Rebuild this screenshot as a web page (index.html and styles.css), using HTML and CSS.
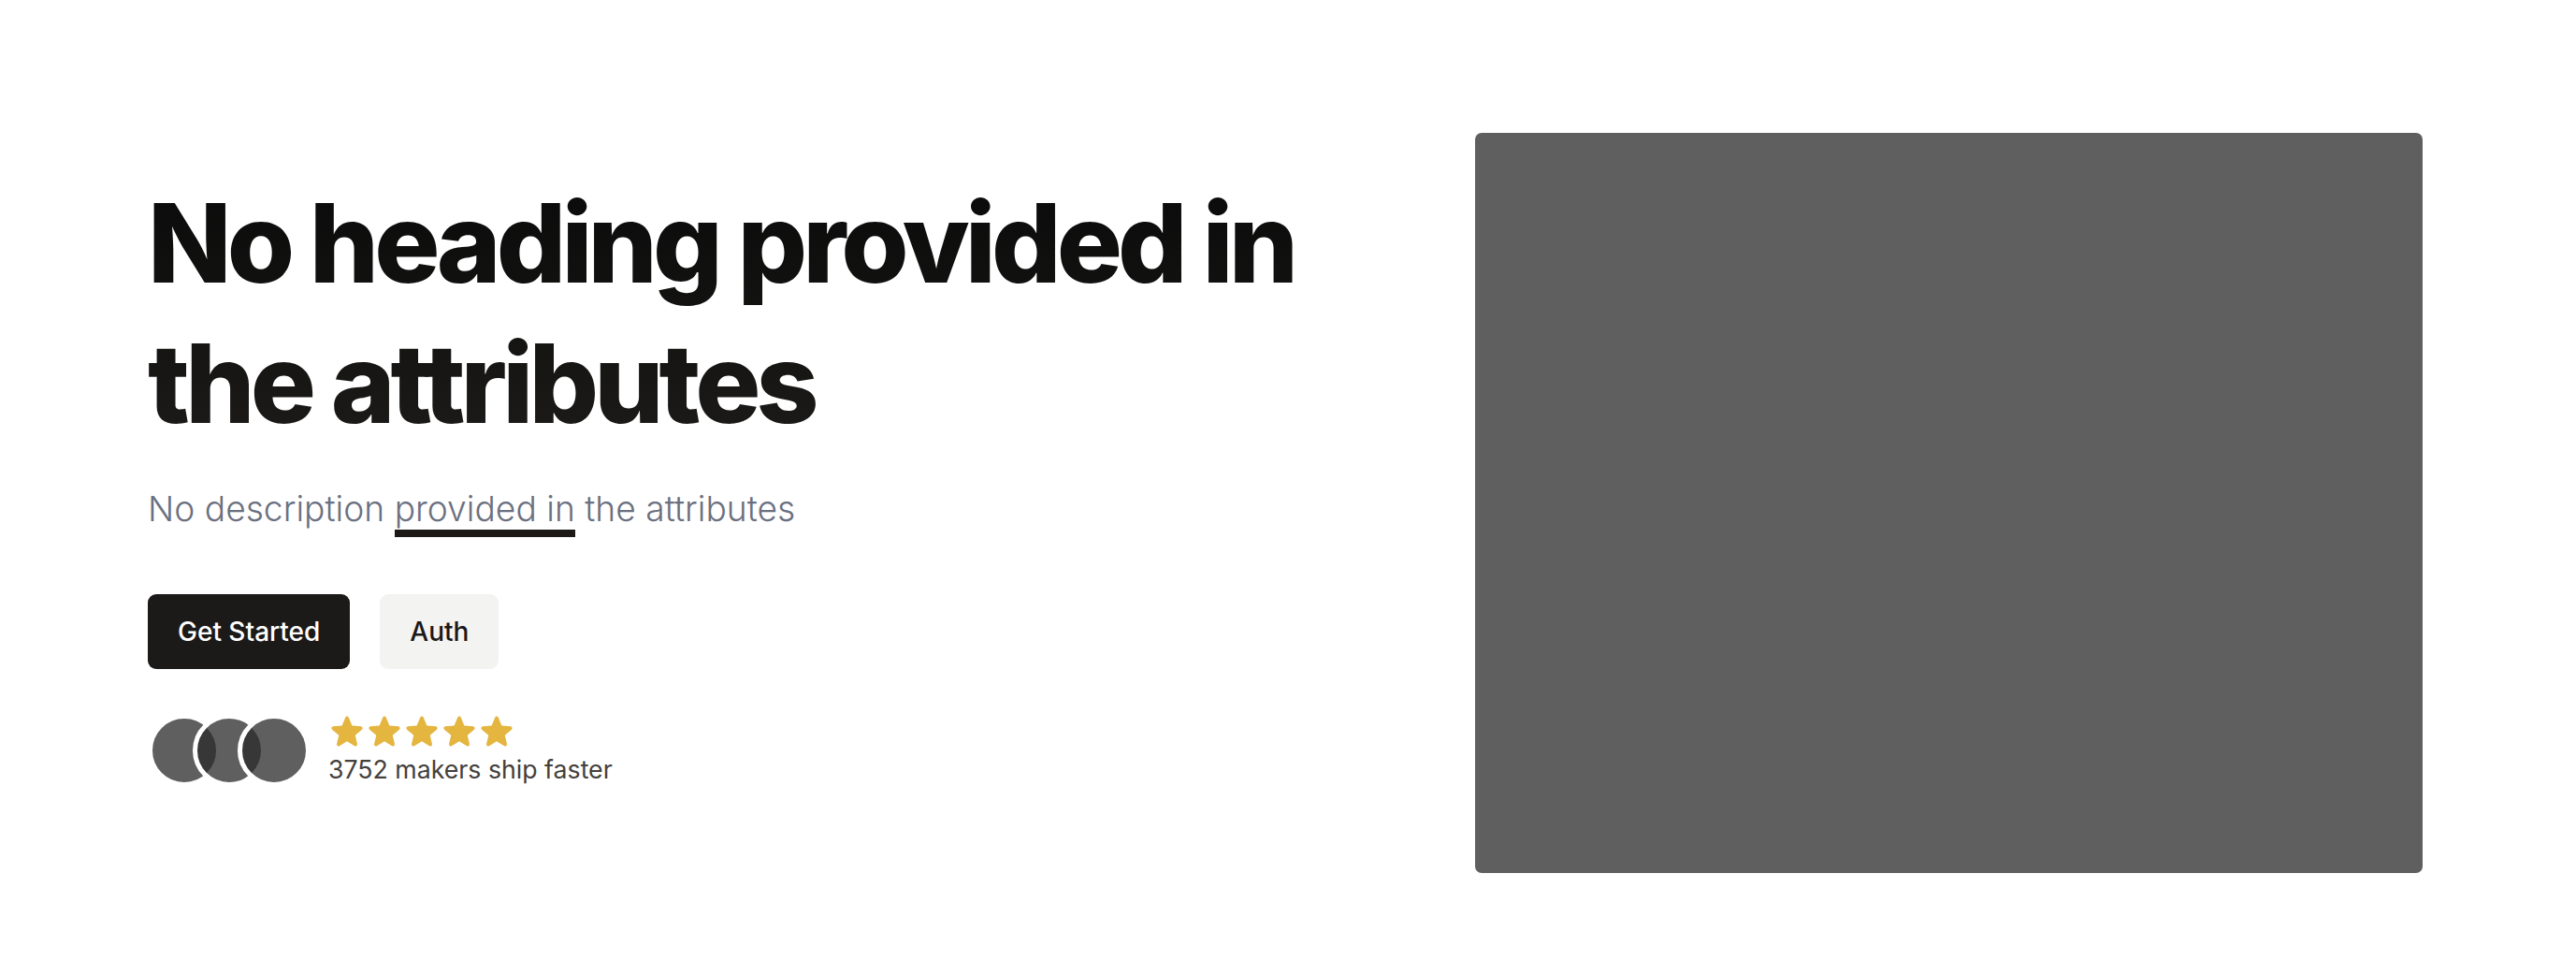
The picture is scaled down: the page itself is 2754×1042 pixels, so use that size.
FILE: index.html
```html
<!DOCTYPE html>
<html lang="en">
<head>
<meta charset="utf-8">
<title>Hero</title>
<link rel="stylesheet" href="styles.css">
</head>
<body>
<section class="hero">
  <div class="hero-copy">
    <h1 class="hero-title">No heading provided in the attributes</h1>
    <p class="hero-desc">No description <span class="mark">provided in</span> the attributes</p>
    <div class="hero-actions">
      <a class="btn btn-primary" href="#">Get Started</a>
      <a class="btn btn-secondary" href="#">Auth</a>
    </div>
    <div class="proof">
      <div class="avatars">
        <span class="avatar"></span>
        <span class="avatar"></span>
        <span class="avatar"></span>
      </div>
      <div class="proof-info">
        <div class="stars">
          <svg class="star" viewBox="0 0 20 20"><path fill-rule="evenodd" d="M10.868 2.884c-.321-.772-1.415-.772-1.736 0l-1.83 4.401-4.753.381c-.833.067-1.171 1.107-.536 1.651l3.62 3.102-1.106 4.637c-.194.813.691 1.456 1.405 1.02L10 15.591l4.069 2.485c.713.436 1.598-.207 1.404-1.02l-1.106-4.637 3.62-3.102c.635-.544.297-1.584-.536-1.65l-4.752-.382-1.831-4.401z"/></svg>
          <svg class="star" viewBox="0 0 20 20"><path fill-rule="evenodd" d="M10.868 2.884c-.321-.772-1.415-.772-1.736 0l-1.83 4.401-4.753.381c-.833.067-1.171 1.107-.536 1.651l3.62 3.102-1.106 4.637c-.194.813.691 1.456 1.405 1.02L10 15.591l4.069 2.485c.713.436 1.598-.207 1.404-1.02l-1.106-4.637 3.62-3.102c.635-.544.297-1.584-.536-1.65l-4.752-.382-1.831-4.401z"/></svg>
          <svg class="star" viewBox="0 0 20 20"><path fill-rule="evenodd" d="M10.868 2.884c-.321-.772-1.415-.772-1.736 0l-1.83 4.401-4.753.381c-.833.067-1.171 1.107-.536 1.651l3.62 3.102-1.106 4.637c-.194.813.691 1.456 1.405 1.02L10 15.591l4.069 2.485c.713.436 1.598-.207 1.404-1.02l-1.106-4.637 3.62-3.102c.635-.544.297-1.584-.536-1.65l-4.752-.382-1.831-4.401z"/></svg>
          <svg class="star" viewBox="0 0 20 20"><path fill-rule="evenodd" d="M10.868 2.884c-.321-.772-1.415-.772-1.736 0l-1.83 4.401-4.753.381c-.833.067-1.171 1.107-.536 1.651l3.62 3.102-1.106 4.637c-.194.813.691 1.456 1.405 1.02L10 15.591l4.069 2.485c.713.436 1.598-.207 1.404-1.02l-1.106-4.637 3.62-3.102c.635-.544.297-1.584-.536-1.65l-4.752-.382-1.831-4.401z"/></svg>
          <svg class="star" viewBox="0 0 20 20"><path fill-rule="evenodd" d="M10.868 2.884c-.321-.772-1.415-.772-1.736 0l-1.83 4.401-4.753.381c-.833.067-1.171 1.107-.536 1.651l3.62 3.102-1.106 4.637c-.194.813.691 1.456 1.405 1.02L10 15.591l4.069 2.485c.713.436 1.598-.207 1.404-1.02l-1.106-4.637 3.62-3.102c.635-.544.297-1.584-.536-1.65l-4.752-.382-1.831-4.401z"/></svg>
        </div>
        <div class="proof-text">3752 makers ship faster</div>
      </div>
    </div>
  </div>
  <div class="hero-media"></div>
</section>
</body>
</html>
```

FILE: styles.css
```css
* { box-sizing: border-box; }
html, body { margin: 0; padding: 0; background: #ffffff; }
body { font-family: Inter, "Noto Sans", sans-serif; color: #1c1917; }

.hero {
  display: grid;
  grid-template-columns: 1fr 1013px;
  column-gap: 177px;
  align-items: start;
  padding: 142px 164px 0 158px;
  height: 1042px;
}

.hero-copy {
  margin-top: 43px;
  display: flex;
  flex-direction: column;
  align-items: flex-start;
}

.hero-title {
  margin: 0;
  font-size: 117px;
  line-height: 150px;
  font-weight: 800;
  letter-spacing: -0.042em;
  background: linear-gradient(to bottom, #0a0a0a 0%, #1c1b19 100%);
  -webkit-background-clip: text;
  background-clip: text;
  color: transparent;
}

.hero-desc {
  margin: 32px 0 0;
  font-size: 37.2px;
  line-height: 54px;
  font-weight: 300;
  color: #6b7080;
}

.mark {
  padding-bottom: 8px;
  background: linear-gradient(#1c1917, #1c1917) no-repeat left bottom / 100% 8px;
}

.hero-actions {
  margin-top: 64px;
  display: flex;
  gap: 32px;
}

.btn {
  display: inline-block;
  height: 80px;
  line-height: 80px;
  padding: 0 32px;
  border-radius: 9px;
  font-size: 28px;
  font-weight: 500;
  text-decoration: none;
}
.btn-primary { background: #1c1a19; color: #ffffff; }
.btn-secondary { background: #f3f3f2; color: #1c1917; }

.proof {
  margin-top: 46px;
  display: flex;
  align-items: center;
  gap: 19px;
}

.avatars { display: flex; }
.avatar {
  width: 78px;
  height: 78px;
  border-radius: 50%;
  border: 5px solid #ffffff;
  background: rgba(42, 42, 42, 0.75);
}
.avatar + .avatar { margin-left: -30px; }

.proof-info { display: flex; flex-direction: column; gap: 2px; }
.stars { display: flex; }
.star { width: 40px; height: 40px; fill: #e4b53f; }
.proof-text {
  font-size: 26.7px;
  line-height: 39px;
  color: #44403c;
}

.hero-media {
  height: 791px;
  background: #5f5f5f;
  border-radius: 7px;
}
```
